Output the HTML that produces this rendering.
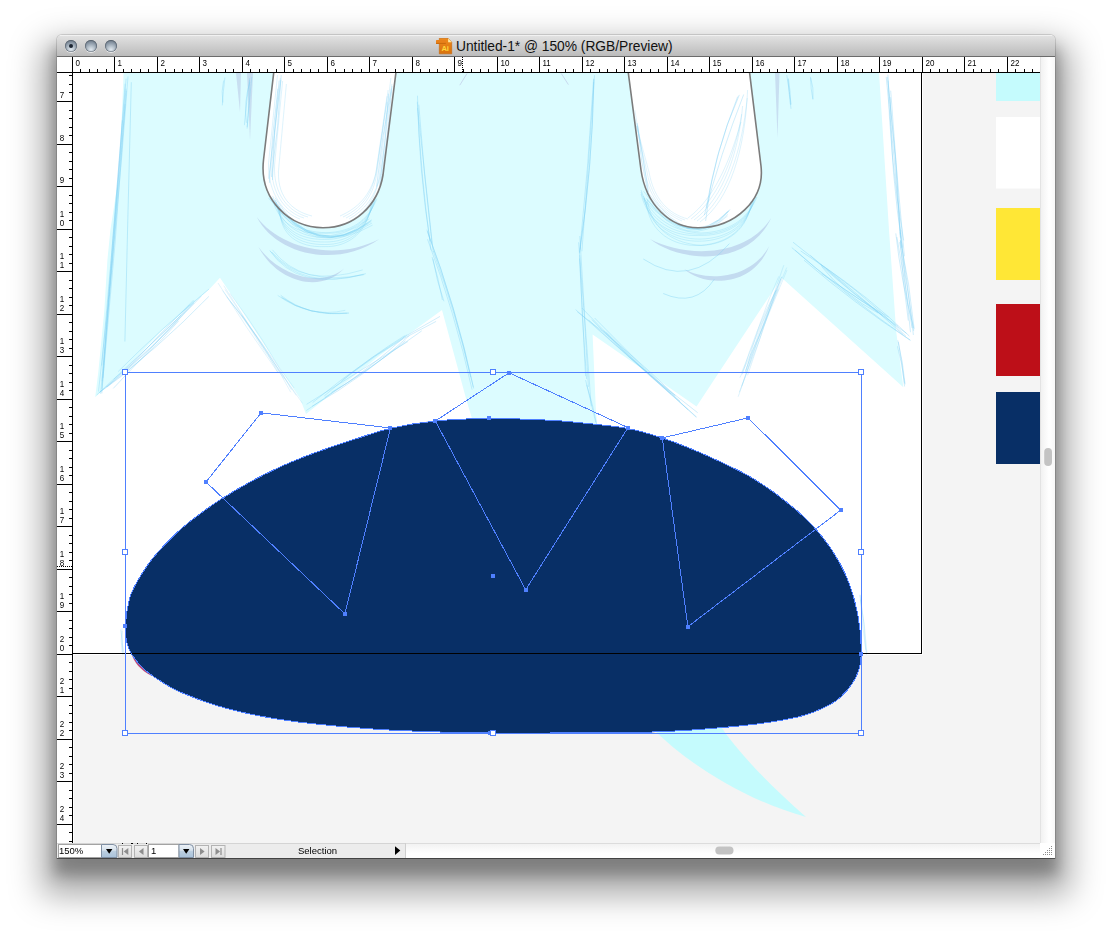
<!DOCTYPE html>
<html>
<head>
<meta charset="utf-8">
<title>Untitled-1* @ 150% (RGB/Preview)</title>
<style>
html,body{margin:0;padding:0;background:#fff;}
body{width:1112px;height:937px;position:relative;overflow:hidden;font-family:"Liberation Sans",sans-serif;}
#win{position:absolute;left:57px;top:35px;width:998px;height:823px;background:#f4f4f4;border-radius:5px 5px 0 0;
  box-shadow:0 0 0 1px rgba(0,0,0,.13),0 1px 0 0 rgba(0,0,0,.38),0 22px 33px 15px rgba(0,0,0,.34),0 14.5px 14px 2.3px rgba(0,0,0,.25);}
#title{position:absolute;left:0;top:0;width:998px;height:21px;border-radius:5px 5px 0 0;border-bottom:1px solid #6b6b6b;
  background:linear-gradient(#f1f1f1 0,#f1f1f1 1px,#e1e1e1 1px,#bbbbbb 100%);}
#title .t{position:absolute;left:379px;top:3px;white-space:nowrap;font-size:13.8px;color:#111;line-height:16px;letter-spacing:-0.02px;}
.tl{position:absolute;top:5px;width:12px;height:12px;border-radius:50%;
  background:radial-gradient(circle at 50% 82%,#e3eaf0 0,#b9c4ce 30%,#8a97a5 62%,#5c6875 100%);
  box-shadow:0 1px 0 rgba(255,255,255,.6), inset 0 0 1px 0.5px rgba(50,60,72,.8);}
.tl i{position:absolute;left:4px;top:4px;width:4px;height:4px;border-radius:50%;background:#1c2532;}
#svgall{position:absolute;left:0;top:0;opacity:.999;}
#status{position:absolute;left:57px;top:843px;width:998px;height:15px;background:#fff;}
</style>
</head>
<body>
<div id="win">
  <div id="title">
    <div class="tl" style="left:8px"><i></i></div>
    <div class="tl" style="left:28px"></div>
    <div class="tl" style="left:48px"></div>
    <div class="t"><svg width="17" height="17" viewBox="0 0 17 17" style="vertical-align:-4px;margin-right:3px"><defs><linearGradient id="aig" x1="0" y1="0" x2="0" y2="1"><stop offset="0" stop-color="#ee8a1c"/><stop offset="1" stop-color="#d9720d"/></linearGradient></defs><path d="M3.3 0.3h8.8l3.6 3.9v11.6H3.3z" fill="url(#aig)" stroke="#c4650a" stroke-width=".6"/><path d="M12.1 0.3l3.6 3.9h-3.6z" fill="#fdeaa5"/><rect x="0" y="2" width="9.8" height="3.9" rx=".6" fill="#e8811a"/><rect x="0" y="4.9" width="9.8" height="1" fill="#c96a0c"/><text x="5.4" y="13.2" font-size="7.6" font-weight="bold" fill="#ffd93b" font-family="Liberation Sans, sans-serif">Ai</text></svg>Untitled-1* @ 150% (RGB/Preview)</div>
  </div>
</div>
<svg id="svgall" width="1112" height="937" viewBox="0 0 1112 937">
  <!-- canvas -->
  <svg x="73" y="73" width="967" height="770" viewBox="73 73 967 770" overflow="hidden">
<rect x="73" y="73" width="967" height="770" fill="#fff"/>
<rect x="74" y="73" width="966" height="770" fill="#f4f4f4"/>
<rect x="73" y="73" width="850" height="582" fill="#fff"/>
<path d="M123.6,72 L119.5,171 L110.4,230 L107.4,260 L104.3,311 L98.3,372 L95.2,397.3 L124.6,370 L161,331.4 L209.8,288.8 L220,277.7 L300,398.4 L306,414 L381,354.5 L442,310 L466.3,399.4 L476,432 L598,432 L596,412.5 L592.6,334.5 L696.5,406.5 L740,340.5 L781.6,277.7 L903.3,387.2 L896.2,331.4 L889,230 L879,72 Z" fill="#dcfcff"/>
<path d="M273.8,72 L263.5,160 C259,200 290,227.8 323,227.8 C355,227.8 378,205 383,175 L396,72 Z" fill="#fff"/>
<path d="M628.2,72 L641,170 C646,205 670,227.8 698,227.8 C735,227.8 765,200 761,166 L749.5,72 Z" fill="#fff"/>
<path d="M256.8,217 C275,253.5 335,269.5 379.4,239 C335,262 280,248 256.8,217Z" fill="#c3dbf0"/>
<path d="M258.3,246.7 C278,283.5 322,293.5 344.6,268 C322,288 280,277 258.3,246.7Z" fill="#c3dbf0"/>
<path d="M650,239.1 C680,263 748,267.5 771.2,218 C745,259 683,257 650,239.1Z" fill="#c3dbf0"/>
<path d="M684.2,269 C702,286 752,289.5 769.3,246 C750,281 704,281 684.2,269Z" fill="#c3dbf0"/>
<path d="M236,73 L240,112 L241,73Z M247,73 L250,140 L253,73Z M775,73 L777.5,138 L779.5,73Z" fill="#c3d7ee" opacity=".8"/>
<path d="M467,73.5 L459.8,85.2 M561.3,73.5 L568.4,84.6" stroke="#c3d0ea" stroke-width=".8" fill="none"/>
<path d="M126.0,88.6 Q112.5,238.6 102.0,388.9 M126.4,90.7 Q113.1,242.0 101.8,393.4 M128.0,76.4 Q116.5,234.2 98.5,391.5 M125.1,83.6 Q114.9,224.7 101.8,365.6 M122.3,120.2 Q114.3,257.2 100.6,393.8 M126.1,78.6 Q112.8,229.8 102.2,381.2 M125.1,103.9 Q116.4,241.2 103.0,378.1" fill="none" stroke="#7ccff3" stroke-width="0.5" opacity="0.7"/>
<path d="M131.3,82.2 Q127.9,211.9 124.9,341.5" fill="none" stroke="#7ccff3" stroke-width="0.5" opacity="0.8"/>
<path d="M194.5,301.0 Q155.0,348.9 106.1,386.8 M189.8,304.5 Q156.3,346.6 113.7,379.2 M178.7,320.9 Q144.0,361.8 99.5,392.4 M194.1,303.0 Q145.8,349.5 96.7,395.0 M180.6,315.6 Q143.8,351.2 107.2,387.0 M193.5,300.2 Q159.1,334.5 126.1,370.4 M209.0,289.0 Q161.5,328.2 118.1,371.6 M201.1,296.3 Q156.7,341.8 113.3,388.4 M208.9,296.4 Q158.2,348.7 99.4,392.4" fill="none" stroke="#7ccff3" stroke-width="0.5" opacity="0.7"/>
<path d="M222.4,290.5 Q258.7,339.0 294.2,388.0 M230.3,301.5 Q258.0,334.3 277.9,372.4 M226.6,296.7 Q264.2,340.7 290.7,392.2 M223.8,285.7 Q258.4,341.6 296.2,395.3 M225.0,289.5 Q262.6,347.3 302.5,403.4 M241.9,315.5 Q261.6,348.1 284.0,378.7 M218.0,283.0 Q246.4,328.3 277.5,371.8 M229.9,293.3 Q264.3,338.9 291.3,389.6" fill="none" stroke="#7ccff3" stroke-width="0.5" opacity="0.45"/>
<path d="M427.3,231.3 Q456.0,307.5 473.3,387.1 M426.9,229.7 Q456.1,307.3 473.7,388.5 M433.2,251.0 Q455.8,312.9 470.6,377.1 M427.5,239.2 Q455.0,312.9 472.1,389.7" fill="none" stroke="#7ccff3" stroke-width="0.5" opacity="0.7"/>
<path d="M421.8,330.8 Q364.9,371.9 306.3,410.5 M407.9,341.5 Q356.9,372.4 306.6,404.3 M436.1,321.4 Q374.8,350.9 324.4,395.8 M405.4,340.9 Q370.6,369.8 331.4,392.4 M406.7,334.9 Q368.6,370.1 324.8,397.5 M404.8,335.6 Q371.6,356.3 341.4,381.0 M409.3,335.6 Q364.7,376.7 312.1,406.3 M440.0,316.4 Q372.0,353.3 312.7,402.5" fill="none" stroke="#7ccff3" stroke-width="0.5" opacity="0.7"/>
<path d="M578.6,242.3 Q585.0,314.5 588.4,386.9 M579.8,236.0 Q584.4,321.2 591.2,406.3" fill="none" stroke="#7ccff3" stroke-width="0.5" opacity="0.7"/>
<path d="M603.7,330.5 Q636.9,365.8 675.0,395.5 M575.6,309.6 Q627.2,356.2 680.2,401.3 M588.7,320.1 Q640.7,369.2 697.7,412.7 M606.3,332.1 Q645.8,372.3 687.9,409.7 M581.9,308.0 Q636.5,365.6 696.7,417.1 M577.2,311.7 Q629.2,350.6 675.5,395.9 M594.6,318.0 Q644.0,369.3 696.2,417.3 M591.9,319.6 Q629.2,359.4 671.0,394.0" fill="none" stroke="#7ccff3" stroke-width="0.5" opacity="0.7"/>
<path d="M786.7,267.6 Q761.5,325.9 741.7,386.3 M787.0,270.0 Q765.5,324.6 739.9,377.7 M778.8,276.3 Q757.9,322.5 745.7,372.1 M780.6,279.0 Q763.4,326.9 747.6,375.3 M783.8,265.2 Q761.3,331.0 738.2,396.7 M778.4,288.8 Q760.3,330.4 744.7,373.0 M775.9,290.6 Q759.9,342.3 739.3,392.2 M776.1,290.1 Q754.9,330.6 742.3,374.4 M781.7,276.7 Q761.2,322.7 745.6,370.7 M781.7,277.1 Q760.4,324.5 741.5,372.9" fill="none" stroke="#7ccff3" stroke-width="0.5" opacity="0.5"/>
<path d="M821.5,266.4 Q845.0,295.9 878.0,313.0 M820.7,264.4 Q868.2,296.2 909.4,336.1 M795.1,250.2 Q849.9,298.8 910.2,340.1 M791.8,247.6 Q836.1,287.8 888.7,317.1 M821.6,273.5 Q865.0,302.1 906.5,333.4 M826.3,269.1 Q853.4,293.8 882.8,315.5 M800.6,250.9 Q858.0,287.3 905.8,336.1 M810.3,255.3 Q851.5,294.5 898.3,326.4 M804.0,260.2 Q854.5,303.8 910.5,340.4 M793.0,242.2 Q849.7,286.0 902.9,334.4" fill="none" stroke="#7ccff3" stroke-width="0.5" opacity="0.75"/>
<path d="M886.2,76.8 Q895.2,162.4 901.4,248.3 M887.6,77.2 Q895.9,155.6 900.7,234.3 M887.9,74.6 Q889.3,158.1 903.7,240.5 M890.7,90.7 Q896.9,164.0 900.3,237.6 M890.2,97.1 Q890.7,172.7 902.4,247.3 M888.0,80.5 Q896.9,168.3 904.4,256.3" fill="none" stroke="#7ccff3" stroke-width="0.5" opacity="0.7"/>
<path d="M900.1,232.3 Q907.6,283.6 913.4,335.0 M899.6,242.1 Q907.5,286.5 913.7,331.1 M900.9,229.9 Q904.3,281.2 910.5,332.2 M895.8,233.4 Q901.1,281.2 913.7,328.1 M896.9,237.1 Q905.1,282.5 912.0,328.0 M900.4,240.8 Q902.4,281.0 908.3,320.6 M900.3,240.0 Q909.9,284.2 914.2,329.2" fill="none" stroke="#7ccff3" stroke-width="0.5" opacity="0.7"/>
<path d="M897.8,340.4 Q903.1,362.1 905.1,384.3 M897.5,346.4 Q902.5,364.6 904.6,383.4 M898.4,342.0 Q902.3,364.2 904.6,386.5" fill="none" stroke="#7ccff3" stroke-width="0.5" opacity="0.7"/>
<path d="M223.6,80.5 Q221.1,91.4 222.8,102.5 M224.9,77.5 Q223.1,91.4 222.3,105.4" fill="none" stroke="#7ccff3" stroke-width="0.5" opacity="0.7"/>
<path d="M249.6,80.1 Q249.3,104.4 247.1,128.6 M251.8,76.9 Q249.2,101.9 247.2,126.9 M249.7,77.9 Q246.4,101.5 244.4,125.2 M249.9,81.8 Q243.7,102.0 246.4,122.9" fill="none" stroke="#7ccff3" stroke-width="0.5" opacity="0.7"/>
<path d="M594.5,75.3 Q588.7,163.4 581.9,251.4 M593.6,82.1 Q592.5,167.6 579.5,252.2 M593.6,78.7 Q588.5,166.2 579.5,253.3 M594.0,79.3 Q592.2,165.0 580.1,249.7" fill="none" stroke="#7ccff3" stroke-width="0.5" opacity="0.7"/>
<path d="M579.7,255.2 Q581.7,317.2 586.6,379.1 M579.5,258.5 Q582.8,317.3 585.5,376.1" fill="none" stroke="#7ccff3" stroke-width="0.5" opacity="0.7"/>
<path d="M585.6,380.1 Q590.7,401.2 595.7,422.3 M586.7,384.8 Q593.3,405.8 597.3,427.4" fill="none" stroke="#7ccff3" stroke-width="0.5" opacity="0.7"/>
<path d="M417.5,95.7 Q418.8,169.0 430.0,241.4 M417.3,101.7 Q420.8,176.3 431.0,250.2 M418.8,104.7 Q423.7,174.2 432.0,243.4 M417.6,108.1 Q425.4,180.1 433.2,252.1" fill="none" stroke="#7ccff3" stroke-width="0.5" opacity="0.7"/>
<path d="M432.1,257.1 Q438.5,278.3 442.4,300.0 M433.0,258.9 Q436.5,280.6 443.9,301.3" fill="none" stroke="#7ccff3" stroke-width="0.5" opacity="0.7"/>
<path d="M786.8,75.1 Q789.1,89.9 791.2,104.6 M788.4,78.4 Q790.7,91.5 790.4,104.7 M788.0,79.1 Q789.0,94.0 791.0,108.8" fill="none" stroke="#7ccff3" stroke-width="0.5" opacity="0.7"/>
<path d="M810.6,77.8 Q810.6,88.7 812.9,99.5 M810.4,76.8 Q814.0,87.8 813.0,99.1" fill="none" stroke="#7ccff3" stroke-width="0.5" opacity="0.7"/>
<path d="M281.2,75.1 Q278.8,126.3 271.6,177.0 M279.1,80.5 Q273.5,130.0 272.5,180.0 M277.9,88.7 Q271.7,135.6 269.4,182.9 M280.9,79.8 Q274.9,129.2 268.6,178.7" fill="none" stroke="#7ccff3" stroke-width="0.5" opacity="0.7"/>
<path d="M392.1,86.1 Q388.2,134.8 380.7,183.2 M388.5,93.6 Q386.3,139.8 379.6,185.4 M391.4,88.5 Q381.6,137.3 376.6,186.6" fill="none" stroke="#7ccff3" stroke-width="0.5" opacity="0.7"/>
<path d="M737.7,96.6 Q716.2,150.6 706.2,207.8 M739.3,94.9 Q712.4,155.1 705.6,221.0 M743.7,94.5 Q720.5,153.9 704.3,215.2" fill="none" stroke="#7ccff3" stroke-width="0.5" opacity="0.7"/>
<path d="M637.6,125.6 Q640.3,161.3 648.6,196.0 M637.1,123.0 Q643.2,157.5 648.5,192.2" fill="none" stroke="#7ccff3" stroke-width="0.5" opacity="0.7"/>
<path d="M269.3,197.3 Q312.7,265.2 372.0,219.8 M275.3,204.0 Q314.6,259.1 369.5,218.7 M270.7,196.7 Q312.9,260.1 372.6,225.1 M274.0,199.3 Q314.3,262.2 371.0,220.7 M268.5,198.2 Q318.7,259.0 372.0,223.0 M274.9,197.7 Q313.2,260.0 371.2,221.6 M275.6,202.8 Q318.0,258.2 368.3,223.7" fill="none" stroke="#7ccff3" stroke-width=".5" opacity="0.6"/>
<path d="M272.4,249.8 Q300.5,287.0 364.3,274.6 M272.0,252.1 Q302.8,288.5 362.7,269.9 M270.1,251.1 Q302.6,291.3 365.9,273.6 M269.7,250.3 Q297.2,291.7 363.4,274.5" fill="none" stroke="#7ccff3" stroke-width=".5" opacity="0.6"/>
<path d="M280.9,296.8 Q307.8,316.5 346.8,313.2 M277.7,295.4 Q310.1,318.5 345.3,310.3 M280.6,295.1 Q308.8,317.8 348.8,312.9 M282.3,297.9 Q308.4,316.5 348.8,313.2" fill="none" stroke="#7ccff3" stroke-width=".5" opacity="0.6"/>
<path d="M643.5,191.2 Q690.0,256.4 729.4,210.1 M646.3,198.4 Q687.8,251.3 728.7,211.4 M646.5,192.6 Q692.4,256.9 730.0,209.6 M648.8,193.5 Q692.6,252.8 727.8,214.1 M643.4,198.6 Q690.0,252.5 727.8,211.3 M646.3,198.6 Q687.2,254.1 727.7,215.8" fill="none" stroke="#7ccff3" stroke-width=".5" opacity="0.6"/>
<path d="M643.3,259.0 Q689.6,289.9 729.4,243.6" fill="none" stroke="#7ccff3" stroke-width=".5" opacity="0.8"/>
<path d="M663.2,293.5 Q695.4,307.8 714.4,279.1" fill="none" stroke="#7ccff3" stroke-width=".5" opacity="0.8"/>
<path d="M272.7,196.0 C280.7,222.0 300.7,232.0 325.7,232.7 C350.7,232.0 367.3,222.0 377.0,198.7 M272.1,198.0 C278.6,224.2 298.6,234.6 323.6,233.2 C348.6,234.6 369.4,223.5 376.0,197.6 M275.5,200.0 C280.5,226.4 300.5,237.2 325.5,237.7 C350.5,237.2 367.5,225.0 375.0,200.5 M276.1,202.0 C279.6,228.6 299.6,239.8 324.6,239.4 C349.6,239.8 368.4,226.5 374.0,200.6 M277.6,204.0 C279.6,230.8 299.6,242.4 324.6,242.0 C349.6,242.4 368.4,228.0 373.0,201.6 M279.0,206.0 C279.5,233.0 299.5,245.0 324.5,244.5 C349.5,245.0 368.5,229.5 372.0,202.5 M280.0,208.0 C279.0,235.2 299.0,247.6 324.0,246.6 C349.0,247.6 369.0,231.0 371.0,203.0" fill="none" stroke="#7ccff3" stroke-width=".5" opacity="0.6"/>
<path d="M277.5,75.0 L268.5,163.5 C268.0,195.0 285.0,214.0 300.0,219.0 M280.3,78.0 L271.8,164.3 C270.5,195.0 287.0,213.0 304.0,218.0 M282.6,81.0 L274.6,164.6 C273.0,195.0 289.0,212.0 308.0,217.0 M286.4,84.0 L278.9,166.4 C275.5,195.0 291.0,211.0 312.0,216.0" fill="none" stroke="#7ccff3" stroke-width=".5" opacity="0.5"/>
<path d="M390.9,78.0 L379.9,170.9 C378.0,196.0 366.0,212.0 352.0,220.0 M391.9,84.0 L380.9,173.4 C376.0,196.0 364.0,211.0 349.0,219.0 M388.1,90.0 L377.1,171.1 C374.0,196.0 362.0,210.0 346.0,218.0 M387.1,96.0 L376.1,171.6 C372.0,196.0 360.0,209.0 343.0,217.0 M387.0,102.0 L376.0,173.0 C370.0,196.0 358.0,208.0 340.0,216.0" fill="none" stroke="#7ccff3" stroke-width=".5" opacity="0.5"/>
<path d="M641.0,190.0 C651.0,220.0 676.0,232.0 701.0,233.0 C729.0,232.0 747.0,220.0 757.0,197.0 M641.0,192.0 C649.8,222.2 674.8,234.4 699.8,234.2 C727.8,234.2 748.2,221.5 756.0,196.8 M641.0,194.0 C648.6,224.4 673.6,236.8 698.6,235.4 C726.6,236.4 749.4,223.0 755.0,196.6 M643.5,196.0 C649.9,226.6 674.9,239.2 699.9,239.1 C727.9,238.6 748.1,224.5 754.0,198.9 M644.4,198.0 C649.6,228.8 674.6,241.6 699.6,241.2 C727.6,240.8 748.4,226.0 753.0,199.6 M647.3,200.0 C651.3,231.0 676.3,244.0 701.3,245.3 C729.3,243.0 746.7,227.5 752.0,202.3 M646.3,202.0 C649.1,233.2 674.1,246.4 699.1,245.5 C727.1,245.2 748.9,229.0 751.0,201.1" fill="none" stroke="#7ccff3" stroke-width=".5" opacity="0.6"/>
<path d="M747.6,90.0 C745.0,150.0 730.0,200.0 700.0,222.0 M747.2,98.0 C742.0,150.0 727.0,199.0 697.0,221.0 M742.6,106.0 C739.0,150.0 724.0,198.0 694.0,220.0 M741.7,114.0 C736.0,150.0 721.0,197.0 691.0,219.0 M740.9,122.0 C733.0,150.0 718.0,196.0 688.0,218.0" fill="none" stroke="#7ccff3" stroke-width=".5" opacity="0.5"/>
<path d="M634.8,110.0 L645.0,172.0 C650.0,200.0 665.0,214.0 682.0,221.0 M634.6,118.0 L647.0,172.0 C652.0,200.0 667.0,214.0 685.0,220.0 M636.6,126.0 L649.0,172.0 C654.0,200.0 669.0,214.0 688.0,219.0" fill="none" stroke="#7ccff3" stroke-width=".5" opacity="0.45"/>
<path d="M273.8,72 L263.5,160 C259,200 290,227.8 323,227.8 C355,227.8 378,205 383,175 L396,72" fill="none" stroke="#7b7b7b" stroke-width="1.6"/>
<path d="M628.2,72 L641,170 C646,205 670,227.8 698,227.8 C735,227.8 765,200 761,166 L749.5,72" fill="none" stroke="#7b7b7b" stroke-width="1.6"/>
<path d="M655,731 C690,765 745,800 806,817 C770,785 740,755 720.5,726 Z" fill="#c5fbfd"/>
<path d="M131.8,654 C133.5,662 141,670.5 151,675.5 L151,665 L135,650 Z" fill="#b8487a"/>
<path d="M122.1,628.2 Q120.2,640.3 122.2,652.2 M120.5,629.5 Q123.4,642.1 122.7,654.9 M122.2,631.0 Q121.1,642.9 124.1,654.6" fill="none" stroke="#7ccff3" stroke-width="0.5" opacity="0.5"/>
<path d="M860.4,599.7 Q865.2,626.4 866.9,653.2 M860.0,595.1 Q864.8,622.4 865.6,649.9 M860.0,594.6 Q861.7,624.8 866.6,654.8" fill="none" stroke="#7ccff3" stroke-width="0.5" opacity="0.5"/>
<path d="M125.3,626.5 C125.7,619.5 127.5,606.8 129.2,599.8 C130.9,592.8 132.4,590.4 135.6,584.4 C138.8,578.4 144.1,569.9 148.4,563.9 C152.7,557.9 156.1,554.1 161.2,548.6 C166.3,543.1 172.8,536.4 179.2,530.6 C185.6,524.8 192.4,519.4 199.7,514.0 C206.9,508.6 214.2,503.5 222.7,498.1 C231.2,492.7 241.9,486.4 250.9,481.5 C259.9,476.6 268.0,472.6 276.5,468.6 C285.0,464.6 293.6,461.0 302.1,457.6 C310.6,454.2 319.2,451.2 327.7,448.2 C336.2,445.2 342.8,443.0 353.3,439.7 C363.9,436.4 377.3,431.3 391.0,428.2 C404.7,425.1 418.9,422.6 435.3,421.0 C451.7,419.4 470.1,418.6 489.1,418.5 C508.1,418.4 532.9,419.4 549.3,420.2 C565.7,421.0 574.7,422.1 587.7,423.5 C600.8,424.9 615.2,426.0 627.6,428.4 C640.0,430.8 650.8,434.1 662.3,437.9 C673.8,441.7 686.8,447.0 696.8,451.2 C706.8,455.4 714.0,458.7 722.5,462.8 C731.0,466.9 739.6,470.7 748.1,475.6 C756.6,480.5 765.2,486.0 773.7,492.2 C782.2,498.4 792.2,506.5 799.3,512.7 C806.3,518.9 810.5,523.0 816.0,529.4 C821.5,535.8 827.7,543.6 832.6,551.1 C837.5,558.6 841.8,566.1 845.4,574.2 C849.0,582.3 852.0,591.0 854.4,599.8 C856.8,608.6 858.6,617.9 859.7,627.0 C860.8,636.1 861.4,647.2 861.2,654.4 C861.1,661.6 860.4,665.2 858.8,670.2 C857.2,675.2 854.7,679.8 851.8,684.2 C848.9,688.6 844.8,693.2 841.3,696.5 C837.8,699.8 835.5,701.6 830.8,704.2 C826.1,706.8 819.1,710.0 813.2,712.2 C807.4,714.4 804.5,715.6 795.7,717.5 C786.9,719.4 772.3,721.9 760.6,723.5 C748.9,725.1 737.2,726.2 725.5,727.3 C713.8,728.4 702.2,729.3 690.5,730.1 C678.8,730.9 667.1,731.5 655.4,731.9 C643.7,732.3 637.9,732.4 620.3,732.6 C602.7,732.8 571.3,732.9 550.0,733.0 C528.7,733.1 507.2,733.1 492.3,733.0 C477.4,732.9 471.9,732.9 460.8,732.6 C449.7,732.4 437.4,731.9 425.7,731.5 C414.0,731.1 402.3,730.7 390.6,730.1 C378.9,729.5 367.2,728.6 355.5,727.7 C343.8,726.8 332.2,725.7 320.5,724.5 C308.8,723.3 297.1,722.0 285.4,720.3 C273.6,718.5 261.7,716.5 250.0,714.0 C238.3,711.5 226.7,708.7 215.0,705.0 C203.3,701.3 188.7,695.8 180.0,692.0 C171.3,688.2 168.4,686.1 162.6,682.4 C156.8,678.7 150.2,674.7 145.0,670.0 C139.8,665.3 134.7,659.0 131.7,654.4 C128.7,649.8 127.9,646.8 126.8,642.1 C125.7,637.5 124.9,633.5 125.3,626.5Z" fill="#082f66"/>
<g stroke="#000" stroke-width="1" shape-rendering="crispEdges"><line x1="921.5" y1="73" x2="921.5" y2="654"/><line x1="73" y1="653.5" x2="922" y2="653.5"/></g>
<g fill="none" stroke="#4f80ff" stroke-width="1" shape-rendering="crispEdges">
<path d="M125.3,626.5 C125.7,619.5 127.5,606.8 129.2,599.8 C130.9,592.8 132.4,590.4 135.6,584.4 C138.8,578.4 144.1,569.9 148.4,563.9 C152.7,557.9 156.1,554.1 161.2,548.6 C166.3,543.1 172.8,536.4 179.2,530.6 C185.6,524.8 192.4,519.4 199.7,514.0 C206.9,508.6 214.2,503.5 222.7,498.1 C231.2,492.7 241.9,486.4 250.9,481.5 C259.9,476.6 268.0,472.6 276.5,468.6 C285.0,464.6 293.6,461.0 302.1,457.6 C310.6,454.2 319.2,451.2 327.7,448.2 C336.2,445.2 342.8,443.0 353.3,439.7 C363.9,436.4 377.3,431.3 391.0,428.2 C404.7,425.1 418.9,422.6 435.3,421.0 C451.7,419.4 470.1,418.6 489.1,418.5 C508.1,418.4 532.9,419.4 549.3,420.2 C565.7,421.0 574.7,422.1 587.7,423.5 C600.8,424.9 615.2,426.0 627.6,428.4 C640.0,430.8 650.8,434.1 662.3,437.9 C673.8,441.7 686.8,447.0 696.8,451.2 C706.8,455.4 714.0,458.7 722.5,462.8 C731.0,466.9 739.6,470.7 748.1,475.6 C756.6,480.5 765.2,486.0 773.7,492.2 C782.2,498.4 792.2,506.5 799.3,512.7 C806.3,518.9 810.5,523.0 816.0,529.4 C821.5,535.8 827.7,543.6 832.6,551.1 C837.5,558.6 841.8,566.1 845.4,574.2 C849.0,582.3 852.0,591.0 854.4,599.8 C856.8,608.6 858.6,617.9 859.7,627.0 C860.8,636.1 861.4,647.2 861.2,654.4 C861.1,661.6 860.4,665.2 858.8,670.2 C857.2,675.2 854.7,679.8 851.8,684.2 C848.9,688.6 844.8,693.2 841.3,696.5 C837.8,699.8 835.5,701.6 830.8,704.2 C826.1,706.8 819.1,710.0 813.2,712.2 C807.4,714.4 804.5,715.6 795.7,717.5 C786.9,719.4 772.3,721.9 760.6,723.5 C748.9,725.1 737.2,726.2 725.5,727.3 C713.8,728.4 702.2,729.3 690.5,730.1 C678.8,730.9 667.1,731.5 655.4,731.9 C643.7,732.3 637.9,732.4 620.3,732.6 C602.7,732.8 571.3,732.9 550.0,733.0 C528.7,733.1 507.2,733.1 492.3,733.0 C477.4,732.9 471.9,732.9 460.8,732.6 C449.7,732.4 437.4,731.9 425.7,731.5 C414.0,731.1 402.3,730.7 390.6,730.1 C378.9,729.5 367.2,728.6 355.5,727.7 C343.8,726.8 332.2,725.7 320.5,724.5 C308.8,723.3 297.1,722.0 285.4,720.3 C273.6,718.5 261.7,716.5 250.0,714.0 C238.3,711.5 226.7,708.7 215.0,705.0 C203.3,701.3 188.7,695.8 180.0,692.0 C171.3,688.2 168.4,686.1 162.6,682.4 C156.8,678.7 150.2,674.7 145.0,670.0 C139.8,665.3 134.7,659.0 131.7,654.4 C128.7,649.8 127.9,646.8 126.8,642.1 C125.7,637.5 124.9,633.5 125.3,626.5Z"/>
<path d="M206,482 L261.1,412.8 L390.5,428 L344.9,613.9Z"/>
<path d="M435.3,421 L509.1,372.8 L628,427.6 L525.7,589.8Z"/>
<path d="M662.3,437.9 L748.1,417.9 L840.8,510.1 L687.9,626.7Z"/>
<rect x="125.5" y="372.5" width="736" height="361"/>
</g>
<g fill="#4f80ff">
<rect x="204" y="480" width="4" height="4"/>
<rect x="259" y="411" width="4" height="4"/>
<rect x="388" y="426" width="4" height="4"/>
<rect x="343" y="612" width="4" height="4"/>
<rect x="433" y="419" width="4" height="4"/>
<rect x="507" y="371" width="4" height="4"/>
<rect x="626" y="426" width="4" height="4"/>
<rect x="524" y="588" width="4" height="4"/>
<rect x="660" y="436" width="4" height="4"/>
<rect x="746" y="416" width="4" height="4"/>
<rect x="839" y="508" width="4" height="4"/>
<rect x="686" y="625" width="4" height="4"/>
<rect x="123" y="624" width="4" height="4"/>
<rect x="487" y="416" width="4" height="4"/>
<rect x="859" y="652" width="4" height="4"/>
<rect x="488" y="731" width="4" height="4"/>
<rect x="491" y="574" width="4" height="4"/>
</g>
<g fill="#fff" stroke="#4f80ff" stroke-width="1" shape-rendering="crispEdges">
<rect x="122.5" y="369.5" width="5" height="5"/>
<rect x="122.5" y="549.5" width="5" height="5"/>
<rect x="122.5" y="730.5" width="5" height="5"/>
<rect x="490.5" y="369.5" width="5" height="5"/>
<rect x="490.5" y="730.5" width="5" height="5"/>
<rect x="858.5" y="369.5" width="5" height="5"/>
<rect x="858.5" y="549.5" width="5" height="5"/>
<rect x="858.5" y="730.5" width="5" height="5"/>
</g>
<rect x="996" y="73" width="44" height="28" fill="#c5fbfd"/>
<rect x="996" y="117" width="44" height="71.5" fill="#fff"/>
<rect x="996" y="208" width="44" height="72" fill="#ffe736"/>
<rect x="996" y="304" width="44" height="72" fill="#bd0f18"/>
<rect x="996" y="392" width="44" height="72" fill="#082f66"/>
  </svg>
  <!-- rulers -->
  <rect x="57" y="57" width="983" height="15.5" fill="#fff"/>
  <rect x="57" y="57" width="15.5" height="786" fill="#fff"/>
  <defs><linearGradient id="vsb" x1="0" y1="0" x2="1" y2="0"><stop offset="0" stop-color="#f0f0f0"/><stop offset=".6" stop-color="#ffffff"/><stop offset="1" stop-color="#f7f7f7"/></linearGradient><linearGradient id="hsb" x1="0" y1="0" x2="0" y2="1"><stop offset="0" stop-color="#f1f1f1"/><stop offset=".7" stop-color="#ffffff"/></linearGradient></defs>
  <rect x="1040" y="57" width="15" height="786" fill="url(#vsb)"/>
  <rect x="1040" y="57" width="1" height="786" fill="#e3e3e3"/>
  <g stroke="#000" stroke-width="1" shape-rendering="crispEdges">
    <line x1="57" y1="72.5" x2="1040" y2="72.5"/>
    <line x1="72.5" y1="57" x2="72.5" y2="843"/>
<line x1="72.5" y1="57" x2="72.5" y2="72"/>
<line x1="80.5" y1="69" x2="80.5" y2="72"/>
<line x1="89.5" y1="69" x2="89.5" y2="72"/>
<line x1="97.5" y1="69" x2="97.5" y2="72"/>
<line x1="106.5" y1="69" x2="106.5" y2="72"/>
<line x1="114.5" y1="57" x2="114.5" y2="72"/>
<line x1="123.5" y1="69" x2="123.5" y2="72"/>
<line x1="131.5" y1="69" x2="131.5" y2="72"/>
<line x1="140.5" y1="69" x2="140.5" y2="72"/>
<line x1="148.5" y1="69" x2="148.5" y2="72"/>
<line x1="157.5" y1="57" x2="157.5" y2="72"/>
<line x1="165.5" y1="69" x2="165.5" y2="72"/>
<line x1="174.5" y1="69" x2="174.5" y2="72"/>
<line x1="182.5" y1="69" x2="182.5" y2="72"/>
<line x1="191.5" y1="69" x2="191.5" y2="72"/>
<line x1="199.5" y1="57" x2="199.5" y2="72"/>
<line x1="208.5" y1="69" x2="208.5" y2="72"/>
<line x1="216.5" y1="69" x2="216.5" y2="72"/>
<line x1="225.5" y1="69" x2="225.5" y2="72"/>
<line x1="233.5" y1="69" x2="233.5" y2="72"/>
<line x1="242.5" y1="57" x2="242.5" y2="72"/>
<line x1="250.5" y1="69" x2="250.5" y2="72"/>
<line x1="259.5" y1="69" x2="259.5" y2="72"/>
<line x1="267.5" y1="69" x2="267.5" y2="72"/>
<line x1="276.5" y1="69" x2="276.5" y2="72"/>
<line x1="284.5" y1="57" x2="284.5" y2="72"/>
<line x1="293.5" y1="69" x2="293.5" y2="72"/>
<line x1="301.5" y1="69" x2="301.5" y2="72"/>
<line x1="310.5" y1="69" x2="310.5" y2="72"/>
<line x1="318.5" y1="69" x2="318.5" y2="72"/>
<line x1="327.5" y1="57" x2="327.5" y2="72"/>
<line x1="335.5" y1="69" x2="335.5" y2="72"/>
<line x1="344.5" y1="69" x2="344.5" y2="72"/>
<line x1="352.5" y1="69" x2="352.5" y2="72"/>
<line x1="361.5" y1="69" x2="361.5" y2="72"/>
<line x1="369.5" y1="57" x2="369.5" y2="72"/>
<line x1="378.5" y1="69" x2="378.5" y2="72"/>
<line x1="386.5" y1="69" x2="386.5" y2="72"/>
<line x1="395.5" y1="69" x2="395.5" y2="72"/>
<line x1="403.5" y1="69" x2="403.5" y2="72"/>
<line x1="412.5" y1="57" x2="412.5" y2="72"/>
<line x1="420.5" y1="69" x2="420.5" y2="72"/>
<line x1="429.5" y1="69" x2="429.5" y2="72"/>
<line x1="437.5" y1="69" x2="437.5" y2="72"/>
<line x1="446.5" y1="69" x2="446.5" y2="72"/>
<line x1="454.5" y1="57" x2="454.5" y2="72"/>
<line x1="463.5" y1="69" x2="463.5" y2="72"/>
<line x1="471.5" y1="69" x2="471.5" y2="72"/>
<line x1="480.5" y1="69" x2="480.5" y2="72"/>
<line x1="488.5" y1="69" x2="488.5" y2="72"/>
<line x1="497.5" y1="57" x2="497.5" y2="72"/>
<line x1="505.5" y1="69" x2="505.5" y2="72"/>
<line x1="514.5" y1="69" x2="514.5" y2="72"/>
<line x1="522.5" y1="69" x2="522.5" y2="72"/>
<line x1="531.5" y1="69" x2="531.5" y2="72"/>
<line x1="539.5" y1="57" x2="539.5" y2="72"/>
<line x1="548.5" y1="69" x2="548.5" y2="72"/>
<line x1="556.5" y1="69" x2="556.5" y2="72"/>
<line x1="565.5" y1="69" x2="565.5" y2="72"/>
<line x1="573.5" y1="69" x2="573.5" y2="72"/>
<line x1="582.5" y1="57" x2="582.5" y2="72"/>
<line x1="590.5" y1="69" x2="590.5" y2="72"/>
<line x1="599.5" y1="69" x2="599.5" y2="72"/>
<line x1="607.5" y1="69" x2="607.5" y2="72"/>
<line x1="616.5" y1="69" x2="616.5" y2="72"/>
<line x1="624.5" y1="57" x2="624.5" y2="72"/>
<line x1="633.5" y1="69" x2="633.5" y2="72"/>
<line x1="641.5" y1="69" x2="641.5" y2="72"/>
<line x1="650.5" y1="69" x2="650.5" y2="72"/>
<line x1="658.5" y1="69" x2="658.5" y2="72"/>
<line x1="667.5" y1="57" x2="667.5" y2="72"/>
<line x1="675.5" y1="69" x2="675.5" y2="72"/>
<line x1="684.5" y1="69" x2="684.5" y2="72"/>
<line x1="692.5" y1="69" x2="692.5" y2="72"/>
<line x1="701.5" y1="69" x2="701.5" y2="72"/>
<line x1="709.5" y1="57" x2="709.5" y2="72"/>
<line x1="718.5" y1="69" x2="718.5" y2="72"/>
<line x1="726.5" y1="69" x2="726.5" y2="72"/>
<line x1="735.5" y1="69" x2="735.5" y2="72"/>
<line x1="743.5" y1="69" x2="743.5" y2="72"/>
<line x1="752.5" y1="57" x2="752.5" y2="72"/>
<line x1="760.5" y1="69" x2="760.5" y2="72"/>
<line x1="769.5" y1="69" x2="769.5" y2="72"/>
<line x1="777.5" y1="69" x2="777.5" y2="72"/>
<line x1="786.5" y1="69" x2="786.5" y2="72"/>
<line x1="794.5" y1="57" x2="794.5" y2="72"/>
<line x1="803.5" y1="69" x2="803.5" y2="72"/>
<line x1="811.5" y1="69" x2="811.5" y2="72"/>
<line x1="820.5" y1="69" x2="820.5" y2="72"/>
<line x1="828.5" y1="69" x2="828.5" y2="72"/>
<line x1="837.5" y1="57" x2="837.5" y2="72"/>
<line x1="845.5" y1="69" x2="845.5" y2="72"/>
<line x1="854.5" y1="69" x2="854.5" y2="72"/>
<line x1="862.5" y1="69" x2="862.5" y2="72"/>
<line x1="871.5" y1="69" x2="871.5" y2="72"/>
<line x1="879.5" y1="57" x2="879.5" y2="72"/>
<line x1="888.5" y1="69" x2="888.5" y2="72"/>
<line x1="896.5" y1="69" x2="896.5" y2="72"/>
<line x1="905.5" y1="69" x2="905.5" y2="72"/>
<line x1="913.5" y1="69" x2="913.5" y2="72"/>
<line x1="922.5" y1="57" x2="922.5" y2="72"/>
<line x1="930.5" y1="69" x2="930.5" y2="72"/>
<line x1="939.5" y1="69" x2="939.5" y2="72"/>
<line x1="947.5" y1="69" x2="947.5" y2="72"/>
<line x1="956.5" y1="69" x2="956.5" y2="72"/>
<line x1="964.5" y1="57" x2="964.5" y2="72"/>
<line x1="973.5" y1="69" x2="973.5" y2="72"/>
<line x1="981.5" y1="69" x2="981.5" y2="72"/>
<line x1="990.5" y1="69" x2="990.5" y2="72"/>
<line x1="998.5" y1="69" x2="998.5" y2="72"/>
<line x1="1007.5" y1="57" x2="1007.5" y2="72"/>
<line x1="1015.5" y1="69" x2="1015.5" y2="72"/>
<line x1="1024.5" y1="69" x2="1024.5" y2="72"/>
<line x1="1032.5" y1="69" x2="1032.5" y2="72"/>
<line x1="69" y1="75.5" x2="72" y2="75.5"/>
<line x1="69" y1="84.5" x2="72" y2="84.5"/>
<line x1="69" y1="92.5" x2="72" y2="92.5"/>
<line x1="57" y1="101.5" x2="72" y2="101.5"/>
<line x1="69" y1="110.5" x2="72" y2="110.5"/>
<line x1="69" y1="118.5" x2="72" y2="118.5"/>
<line x1="69" y1="127.5" x2="72" y2="127.5"/>
<line x1="69" y1="135.5" x2="72" y2="135.5"/>
<line x1="57" y1="144.5" x2="72" y2="144.5"/>
<line x1="69" y1="152.5" x2="72" y2="152.5"/>
<line x1="69" y1="161.5" x2="72" y2="161.5"/>
<line x1="69" y1="169.5" x2="72" y2="169.5"/>
<line x1="69" y1="178.5" x2="72" y2="178.5"/>
<line x1="57" y1="186.5" x2="72" y2="186.5"/>
<line x1="69" y1="195.5" x2="72" y2="195.5"/>
<line x1="69" y1="203.5" x2="72" y2="203.5"/>
<line x1="69" y1="212.5" x2="72" y2="212.5"/>
<line x1="69" y1="220.5" x2="72" y2="220.5"/>
<line x1="57" y1="229.5" x2="72" y2="229.5"/>
<line x1="69" y1="237.5" x2="72" y2="237.5"/>
<line x1="69" y1="246.5" x2="72" y2="246.5"/>
<line x1="69" y1="254.5" x2="72" y2="254.5"/>
<line x1="69" y1="263.5" x2="72" y2="263.5"/>
<line x1="57" y1="271.5" x2="72" y2="271.5"/>
<line x1="69" y1="280.5" x2="72" y2="280.5"/>
<line x1="69" y1="288.5" x2="72" y2="288.5"/>
<line x1="69" y1="297.5" x2="72" y2="297.5"/>
<line x1="69" y1="305.5" x2="72" y2="305.5"/>
<line x1="57" y1="314.5" x2="72" y2="314.5"/>
<line x1="69" y1="322.5" x2="72" y2="322.5"/>
<line x1="69" y1="331.5" x2="72" y2="331.5"/>
<line x1="69" y1="339.5" x2="72" y2="339.5"/>
<line x1="69" y1="348.5" x2="72" y2="348.5"/>
<line x1="57" y1="356.5" x2="72" y2="356.5"/>
<line x1="69" y1="365.5" x2="72" y2="365.5"/>
<line x1="69" y1="373.5" x2="72" y2="373.5"/>
<line x1="69" y1="382.5" x2="72" y2="382.5"/>
<line x1="69" y1="390.5" x2="72" y2="390.5"/>
<line x1="57" y1="399.5" x2="72" y2="399.5"/>
<line x1="69" y1="407.5" x2="72" y2="407.5"/>
<line x1="69" y1="416.5" x2="72" y2="416.5"/>
<line x1="69" y1="424.5" x2="72" y2="424.5"/>
<line x1="69" y1="433.5" x2="72" y2="433.5"/>
<line x1="57" y1="441.5" x2="72" y2="441.5"/>
<line x1="69" y1="450.5" x2="72" y2="450.5"/>
<line x1="69" y1="458.5" x2="72" y2="458.5"/>
<line x1="69" y1="467.5" x2="72" y2="467.5"/>
<line x1="69" y1="475.5" x2="72" y2="475.5"/>
<line x1="57" y1="484.5" x2="72" y2="484.5"/>
<line x1="69" y1="492.5" x2="72" y2="492.5"/>
<line x1="69" y1="501.5" x2="72" y2="501.5"/>
<line x1="69" y1="509.5" x2="72" y2="509.5"/>
<line x1="69" y1="518.5" x2="72" y2="518.5"/>
<line x1="57" y1="526.5" x2="72" y2="526.5"/>
<line x1="69" y1="535.5" x2="72" y2="535.5"/>
<line x1="69" y1="543.5" x2="72" y2="543.5"/>
<line x1="69" y1="552.5" x2="72" y2="552.5"/>
<line x1="69" y1="560.5" x2="72" y2="560.5"/>
<line x1="57" y1="569.5" x2="72" y2="569.5"/>
<line x1="69" y1="577.5" x2="72" y2="577.5"/>
<line x1="69" y1="586.5" x2="72" y2="586.5"/>
<line x1="69" y1="594.5" x2="72" y2="594.5"/>
<line x1="69" y1="603.5" x2="72" y2="603.5"/>
<line x1="57" y1="611.5" x2="72" y2="611.5"/>
<line x1="69" y1="620.5" x2="72" y2="620.5"/>
<line x1="69" y1="628.5" x2="72" y2="628.5"/>
<line x1="69" y1="637.5" x2="72" y2="637.5"/>
<line x1="69" y1="645.5" x2="72" y2="645.5"/>
<line x1="57" y1="654.5" x2="72" y2="654.5"/>
<line x1="69" y1="662.5" x2="72" y2="662.5"/>
<line x1="69" y1="671.5" x2="72" y2="671.5"/>
<line x1="69" y1="679.5" x2="72" y2="679.5"/>
<line x1="69" y1="688.5" x2="72" y2="688.5"/>
<line x1="57" y1="696.5" x2="72" y2="696.5"/>
<line x1="69" y1="705.5" x2="72" y2="705.5"/>
<line x1="69" y1="713.5" x2="72" y2="713.5"/>
<line x1="69" y1="722.5" x2="72" y2="722.5"/>
<line x1="69" y1="730.5" x2="72" y2="730.5"/>
<line x1="57" y1="739.5" x2="72" y2="739.5"/>
<line x1="69" y1="747.5" x2="72" y2="747.5"/>
<line x1="69" y1="756.5" x2="72" y2="756.5"/>
<line x1="69" y1="764.5" x2="72" y2="764.5"/>
<line x1="69" y1="773.5" x2="72" y2="773.5"/>
<line x1="57" y1="781.5" x2="72" y2="781.5"/>
<line x1="69" y1="790.5" x2="72" y2="790.5"/>
<line x1="69" y1="798.5" x2="72" y2="798.5"/>
<line x1="69" y1="807.5" x2="72" y2="807.5"/>
<line x1="69" y1="815.5" x2="72" y2="815.5"/>
<line x1="57" y1="824.5" x2="72" y2="824.5"/>
<line x1="69" y1="832.5" x2="72" y2="832.5"/>
<line x1="69" y1="841.5" x2="72" y2="841.5"/>
  </g>
  <g stroke="#000" stroke-width="1" stroke-dasharray="1 1" shape-rendering="crispEdges"><line x1="462.5" y1="57" x2="462.5" y2="72"/><line x1="57" y1="566.5" x2="72" y2="566.5"/></g>
  <g font-family="Liberation Sans, sans-serif" font-size="9.8" fill="#000" style="filter:grayscale(1)">
<text transform="translate(75.5,66) scale(.82,1)">0</text>
<text transform="translate(117.5,66) scale(.82,1)">1</text>
<text transform="translate(160.5,66) scale(.82,1)">2</text>
<text transform="translate(202.5,66) scale(.82,1)">3</text>
<text transform="translate(245.5,66) scale(.82,1)">4</text>
<text transform="translate(287.5,66) scale(.82,1)">5</text>
<text transform="translate(330.5,66) scale(.82,1)">6</text>
<text transform="translate(372.5,66) scale(.82,1)">7</text>
<text transform="translate(415.5,66) scale(.82,1)">8</text>
<text transform="translate(457.5,66) scale(.82,1)">9</text>
<text transform="translate(500.5,66) scale(.82,1)">10</text>
<text transform="translate(542.5,66) scale(.82,1)">11</text>
<text transform="translate(585.5,66) scale(.82,1)">12</text>
<text transform="translate(627.5,66) scale(.82,1)">13</text>
<text transform="translate(670.5,66) scale(.82,1)">14</text>
<text transform="translate(712.5,66) scale(.82,1)">15</text>
<text transform="translate(755.5,66) scale(.82,1)">16</text>
<text transform="translate(797.5,66) scale(.82,1)">17</text>
<text transform="translate(840.5,66) scale(.82,1)">18</text>
<text transform="translate(882.5,66) scale(.82,1)">19</text>
<text transform="translate(925.5,66) scale(.82,1)">20</text>
<text transform="translate(967.5,66) scale(.82,1)">21</text>
<text transform="translate(1010.5,66) scale(.82,1)">22</text>
<text transform="translate(59.8,97.5) scale(.82,1)">7</text>
<text transform="translate(59.8,140.5) scale(.82,1)">8</text>
<text transform="translate(59.8,182.5) scale(.82,1)">9</text>
<text transform="translate(59.8,225.5) scale(.82,1)">0</text>
<text transform="translate(59.8,216.5) scale(.82,1)">1</text>
<text transform="translate(59.8,267.5) scale(.82,1)">1</text>
<text transform="translate(59.8,258.5) scale(.82,1)">1</text>
<text transform="translate(59.8,310.5) scale(.82,1)">2</text>
<text transform="translate(59.8,301.5) scale(.82,1)">1</text>
<text transform="translate(59.8,352.5) scale(.82,1)">3</text>
<text transform="translate(59.8,343.5) scale(.82,1)">1</text>
<text transform="translate(59.8,395.5) scale(.82,1)">4</text>
<text transform="translate(59.8,386.5) scale(.82,1)">1</text>
<text transform="translate(59.8,437.5) scale(.82,1)">5</text>
<text transform="translate(59.8,428.5) scale(.82,1)">1</text>
<text transform="translate(59.8,480.5) scale(.82,1)">6</text>
<text transform="translate(59.8,471.5) scale(.82,1)">1</text>
<text transform="translate(59.8,522.5) scale(.82,1)">7</text>
<text transform="translate(59.8,513.5) scale(.82,1)">1</text>
<text transform="translate(59.8,565.5) scale(.82,1)">8</text>
<text transform="translate(59.8,556.5) scale(.82,1)">1</text>
<text transform="translate(59.8,607.5) scale(.82,1)">9</text>
<text transform="translate(59.8,598.5) scale(.82,1)">1</text>
<text transform="translate(59.8,650.5) scale(.82,1)">0</text>
<text transform="translate(59.8,641.5) scale(.82,1)">2</text>
<text transform="translate(59.8,692.5) scale(.82,1)">1</text>
<text transform="translate(59.8,683.5) scale(.82,1)">2</text>
<text transform="translate(59.8,735.5) scale(.82,1)">2</text>
<text transform="translate(59.8,726.5) scale(.82,1)">2</text>
<text transform="translate(59.8,777.5) scale(.82,1)">3</text>
<text transform="translate(59.8,768.5) scale(.82,1)">2</text>
<text transform="translate(59.8,820.5) scale(.82,1)">4</text>
<text transform="translate(59.8,811.5) scale(.82,1)">2</text>
  </g>
  <!-- status bar -->
  <rect x="57" y="843" width="998" height="15" fill="#fff"/>
  <rect x="405" y="843" width="635" height="15" fill="url(#hsb)"/>
  <rect x="405" y="843" width="635" height="1" fill="#dcdcdc"/>
  <rect x="57" y="843" width="348" height="15" fill="#ececec"/>
  <rect x="57" y="843" width="348" height="1" fill="#d4d4d4"/>
  <rect x="405" y="843" width="1" height="15" fill="#cfcfcf"/>
  <defs><linearGradient id="ddg" x1="0" y1="0" x2="0" y2="1"><stop offset="0" stop-color="#eef3f8"/><stop offset=".45" stop-color="#d5e1ec"/><stop offset=".5" stop-color="#bccfe0"/><stop offset="1" stop-color="#a9c2da"/></linearGradient>
  <linearGradient id="nbg" x1="0" y1="0" x2="0" y2="1"><stop offset="0" stop-color="#f2f2f2"/><stop offset="1" stop-color="#dcdcdc"/></linearGradient></defs>
  <rect x="58.5" y="844.5" width="43" height="13" fill="#fff" stroke="#a3a3a3" stroke-width="1"/>
  <path d="M101.5 844.5h11.5q4 0 4 4v9h-15.5z" fill="url(#ddg)" stroke="#7f8fa3" stroke-width="1"/>
  <path d="M106 849h6.4l-3.2 4.8z" fill="#000"/>
  <rect x="118.5" y="845.5" width="13" height="12" fill="url(#nbg)" stroke="#b3b3b3"/>
  <rect x="134.5" y="845.5" width="13" height="12" fill="url(#nbg)" stroke="#b3b3b3"/>
  <path d="M122.5 848v7" stroke="#8d8d8d" stroke-width="1.2"/><path d="M128.3 848v7l-4.6-3.5z" fill="#8d8d8d"/>
  <path d="M143.5 848v7l-4.6-3.5z" fill="#8d8d8d"/>
  <rect x="148.500" y="844.5" width="30.5" height="13" fill="#fff" stroke="#a3a3a3"/>
  <path d="M179 844.5h10.500q4 0 4 4v9h-14.500z" fill="url(#ddg)" stroke="#7f8fa3" stroke-width="1"/>
  <path d="M183 849h6.400l-3.200 4.800z" fill="#000"/>
  <rect x="195.500" y="845.5" width="13" height="12" fill="url(#nbg)" stroke="#b3b3b3"/>
  <rect x="211.500" y="845.5" width="13.500" height="12" fill="url(#nbg)" stroke="#b3b3b3"/>
  <path d="M200 848v7l4.600-3.500z" fill="#8d8d8d"/>
  <path d="M215.500 848v7l4.600-3.500z" fill="#8d8d8d"/><path d="M221 848v7" stroke="#8d8d8d" stroke-width="1.200"/>
  <g fill="#000"><rect x="122" y="843" width="1" height="1"/><rect x="131" y="843" width="2" height="1"/><rect x="137" y="843" width="1" height="1"/><rect x="146" y="843" width="1" height="1"/></g>
  <path d="M395 846.3v8.600l5.300-4.300z" fill="#000"/>
  <g font-family="Liberation Sans, sans-serif" font-size="9.5" fill="#000" style="filter:grayscale(1)">
    <text x="59" y="854">150%</text>
    <text x="151" y="854">1</text>
    <text x="298" y="854">Selection</text>
  </g>
  <rect x="715.3" y="846.6" width="18.2" height="7.8" rx="3.9" fill="#c3c3c3"/>
  <rect x="1044.2" y="448" width="7.8" height="18" rx="3.9" fill="#c3c3c3"/>
  <g fill="#8c8c8c"><rect x="1051" y="846" width="1" height="1"/><rect x="1051" y="848" width="1" height="1"/><rect x="1049" y="848" width="1" height="1"/><rect x="1051" y="850" width="1" height="1"/><rect x="1049" y="850" width="1" height="1"/><rect x="1047" y="850" width="1" height="1"/><rect x="1051" y="852" width="1" height="1"/><rect x="1049" y="852" width="1" height="1"/><rect x="1047" y="852" width="1" height="1"/><rect x="1045" y="852" width="1" height="1"/><rect x="1051" y="854" width="1" height="1"/><rect x="1049" y="854" width="1" height="1"/><rect x="1047" y="854" width="1" height="1"/><rect x="1045" y="854" width="1" height="1"/><rect x="1043" y="854" width="1" height="1"/></g>
</svg>
</body>
</html>
